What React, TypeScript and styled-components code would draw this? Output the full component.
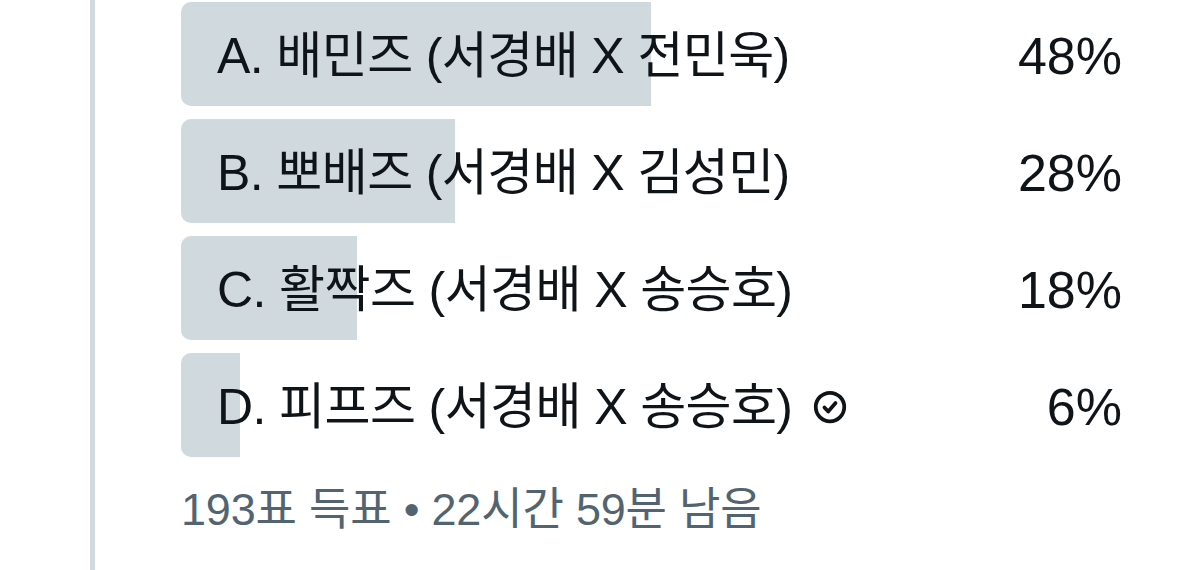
import React from "react";
import styled, { createGlobalStyle } from "styled-components";

const GlobalStyle = createGlobalStyle`
  html, body {
    margin: 0;
    padding: 0;
    background: #ffffff;
  }
  body {
    font-family: "Liberation Sans", "Noto Sans CJK KR", sans-serif;
    color: #0f1419;
  }
`;

type Choice = {
  label: string;
  percent: number;
  voted?: boolean;
};

const choices: Choice[] = [
  { label: "A. 배민즈 (서경배 X 전민욱)", percent: 48 },
  { label: "B. 뽀배즈 (서경배 X 김성민)", percent: 28 },
  { label: "C. 활짝즈 (서경배 X 송승호)", percent: 18 },
  { label: "D. 피프즈 (서경배 X 송승호)", percent: 6, voted: true },
];

const CheckCircle = () => (
  <svg width="36" height="36" viewBox="0 0 24 24" fill="none">
    <circle cx="12" cy="12" r="9.5" stroke="#0f1419" strokeWidth="2.5" />
    <path
      d="M8.3 12.3l2.5 2.7 4.9-5.6"
      stroke="#0f1419"
      strokeWidth="2.5"
      strokeLinecap="round"
      strokeLinejoin="round"
    />
  </svg>
);

const App = () => {
  return (
    <Page>
      <GlobalStyle />
      <Gutter>
        <ThreadLine />
      </Gutter>
      <Poll>
        <Options>
          {choices.map((c) => (
            <Option key={c.label}>
              <Fill style={{ width: `${c.percent}%` }} />
              <Label>
                {c.label}
                {c.voted && (
                  <Mark>
                    <CheckCircle />
                  </Mark>
                )}
              </Label>
              <Percent>{c.percent}%</Percent>
            </Option>
          ))}
        </Options>
        <Meta>193표 득표 • 22시간 59분 남음</Meta>
      </Poll>
    </Page>
  );
};

export default App;

const Page = styled.div`
  display: flex;
  width: 1200px;
  height: 570px;
  overflow: hidden;
  background: #ffffff;
`;

const Gutter = styled.div`
  width: 181px;
  flex-shrink: 0;
  display: flex;
  padding-left: 90px;
  box-sizing: border-box;
`;

const ThreadLine = styled.div`
  width: 5px;
  height: 100%;
  background: #cfd9de;
`;

const Poll = styled.div`
  flex: 1;
  padding-top: 2px;
  padding-right: 39px;
  display: flex;
  flex-direction: column;
`;

const Options = styled.div`
  display: flex;
  flex-direction: column;
  gap: 13px;
`;

const Option = styled.div`
  position: relative;
  height: 104px;
  display: flex;
  align-items: center;
  justify-content: space-between;
  padding: 4px 39px 0 36px;
  box-sizing: border-box;
`;

const Fill = styled.div`
  position: absolute;
  left: 0;
  top: 0;
  bottom: 0;
  background: #cfd9de;
  border-radius: 10px 0 0 10px;
`;

const Label = styled.div`
  position: relative;
  display: flex;
  align-items: center;
  font-size: 50px;
  letter-spacing: -0.6px;
  line-height: 1;
  color: #0f1419;
  white-space: nowrap;
`;

const Mark = styled.span`
  display: inline-flex;
  margin-left: 20px;
`;

const Percent = styled.div`
  position: relative;
  font-size: 52px;
  line-height: 1;
  color: #0f1419;
`;

const Meta = styled.div`
  margin-top: 26px;
  font-size: 45px;
  letter-spacing: -0.2px;
  line-height: 1.2;
  color: #536471;
  white-space: nowrap;
`;
